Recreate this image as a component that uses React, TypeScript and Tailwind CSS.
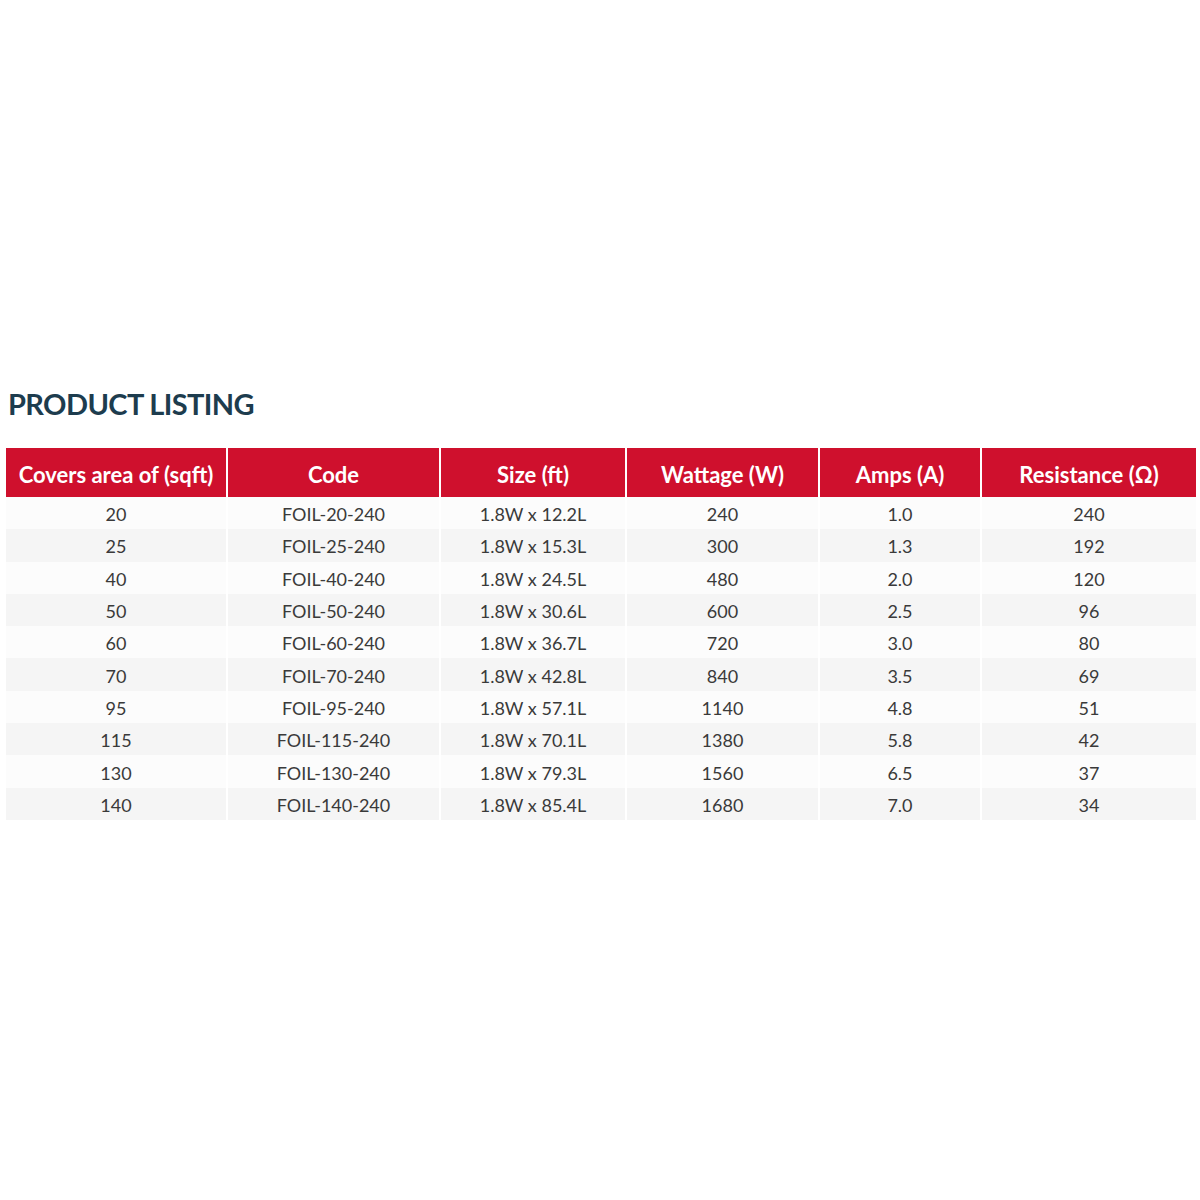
import React from 'react';

const columns = [
  { label: 'Covers area of (sqft)', width: 'w-[220px]' },
  { label: 'Code', width: 'w-[211px]' },
  { label: 'Size (ft)', width: 'w-[184px]' },
  { label: 'Wattage (W)', width: 'w-[191px]' },
  { label: 'Amps (A)', width: 'w-[160px]' },
  { label: 'Resistance (Ω)', width: 'w-[214px]' },
];

const rows = [
  ['20', 'FOIL-20-240', '1.8W x 12.2L', '240', '1.0', '240'],
  ['25', 'FOIL-25-240', '1.8W x 15.3L', '300', '1.3', '192'],
  ['40', 'FOIL-40-240', '1.8W x 24.5L', '480', '2.0', '120'],
  ['50', 'FOIL-50-240', '1.8W x 30.6L', '600', '2.5', '96'],
  ['60', 'FOIL-60-240', '1.8W x 36.7L', '720', '3.0', '80'],
  ['70', 'FOIL-70-240', '1.8W x 42.8L', '840', '3.5', '69'],
  ['95', 'FOIL-95-240', '1.8W x 57.1L', '1140', '4.8', '51'],
  ['115', 'FOIL-115-240', '1.8W x 70.1L', '1380', '5.8', '42'],
  ['130', 'FOIL-130-240', '1.8W x 79.3L', '1560', '6.5', '37'],
  ['140', 'FOIL-140-240', '1.8W x 85.4L', '1680', '7.0', '34'],
];

const App = () => {
  return (
    <div className="w-[1200px] h-[1200px] bg-white font-['Lato',sans-serif]">
      <div className="pt-[381px] pl-[6px] pr-[4px]">
        <h2 className="pl-[2px] text-[29px] leading-[46px] font-bold tracking-[-0.6px] text-[#1d3c4e]">
          PRODUCT LISTING
        </h2>

        {/* table */}
        <div className="mt-[21px] flex flex-col">
          <div className="flex gap-[2px]">
            {columns.map((col) => (
              <div
                key={col.label}
                className={`${col.width} shrink-0 h-[49px] pt-[3px] bg-[#cf102d] text-white text-[22px] font-bold flex items-center justify-center`}
              >
                {col.label}
              </div>
            ))}
          </div>

          {rows.map((row, i) => (
            <div key={i} className="flex gap-[2px]">
              {row.map((cell, j) => (
                <div
                  key={j}
                  className={`${columns[j].width} shrink-0 h-[32.3px] pt-[3px] ${i % 2 === 0 ? 'bg-[#fcfcfc]' : 'bg-[#f5f5f5]'} text-[18px] text-[#3a3a3a] flex items-center justify-center`}
                >
                  {cell}
                </div>
              ))}
            </div>
          ))}
        </div>
      </div>
    </div>
  );
};

export default App;
